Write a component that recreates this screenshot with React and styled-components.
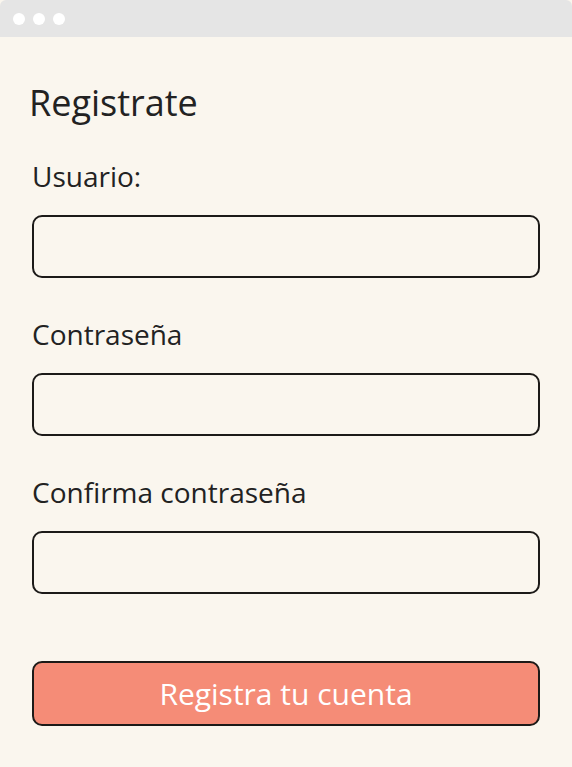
import React from 'react'
import styled, { createGlobalStyle } from 'styled-components'

const GlobalStyle = createGlobalStyle`
	html, body {
		margin: 0;
		padding: 0;
		background: #faf6ee;
	}
	* {
		box-sizing: border-box;
	}
`

const Window = styled.div`
	width: 572px;
	height: 767px;
	background: #faf6ee;
	border-top-left-radius: 6px;
	border-top-right-radius: 6px;
	overflow: hidden;
	font-family: "Open Sans", "Noto Sans", sans-serif;
	color: #222;
`

const TitleBar = styled.div`
	height: 37px;
	background: #e5e5e5;
	display: flex;
	align-items: center;
	gap: 8px;
	padding-left: 13px;
`

const Dot = styled.span`
	width: 12px;
	height: 12px;
	border-radius: 50%;
	background: #fff;
`

const Form = styled.form`
	display: flex;
	flex-direction: column;
	padding: 44px 32px 0 32px;
`

const Title = styled.h1`
	margin: 0 0 32px -3px;
	font-size: 36px;
	font-weight: 400;
	line-height: 44px;
`

const Label = styled.label`
	font-size: 28px;
	line-height: 38px;
	margin-bottom: 20px;
`

const Input = styled.input`
	height: 63px;
	width: 100%;
	border: 2px solid #1c1a18;
	border-radius: 10px;
	background: transparent;
	margin-bottom: ${p => p.$last ? '67px' : '37px'};
	outline: none;
`

const Button = styled.button`
	height: 65px;
	width: 100%;
	border: 2px solid #1c1a18;
	border-radius: 10px;
	background: #f58c77;
	color: #fff;
	font-family: "Open Sans", "Noto Sans", sans-serif;
	font-size: 30px;
	cursor: pointer;
`

export default function App() {
	return (
		<>
			<GlobalStyle />
			<Window>
				<TitleBar>
					<Dot />
					<Dot />
					<Dot />
				</TitleBar>
				<Form onSubmit={e => e.preventDefault()}>
					<Title>Registrate</Title>
					<Label>Usuario:</Label>
					<Input type="text" />
					<Label>Contraseña</Label>
					<Input type="password" />
					<Label>Confirma contraseña</Label>
					<Input type="password" $last />
					<Button type="submit">Registra tu cuenta</Button>
				</Form>
			</Window>
		</>
	)
}
